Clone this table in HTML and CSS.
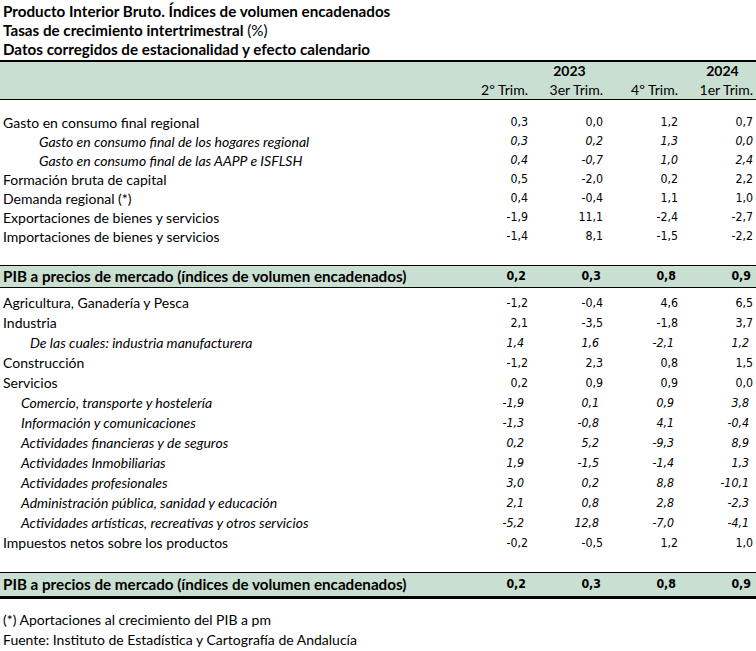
FILE: index.html
```html
<!DOCTYPE html>
<html lang="es">
<head>
<meta charset="utf-8">
<title>Producto Interior Bruto</title>
<link rel="stylesheet" href="styles.css">
</head>
<body>
<div class="titles">
  <div class="t">Producto Interior Bruto. Índices de volumen encadenados</div>
  <div class="t">Tasas de crecimiento intertrimestral <span class="norm">(%)</span></div>
  <div class="t">Datos corregidos de estacionalidad y efecto calendario</div>
</div>
<div class="table">
  <div class="head">
    <div class="hrow years"><span class="lab"></span><span class="y2023">2023</span><span class="y2024">2024</span></div>
    <div class="hrow trims"><span class="lab"></span><span>2º Trim.</span><span>3er Trim.</span><span>4º Trim.</span><span>1er Trim.</span></div>
  </div>
  <div class="sec sec1">
    <div class="row"><span class="lab">Gasto en consumo final regional</span><span class="v">0,3</span><span class="v">0,0</span><span class="v">1,2</span><span class="v">0,7</span></div>
    <div class="row it"><span class="lab ind1">Gasto en consumo final de los hogares regional</span><span class="v">0,3</span><span class="v">0,2</span><span class="v">1,3</span><span class="v">0,0</span></div>
    <div class="row it"><span class="lab ind1">Gasto en consumo final de las AAPP e ISFLSH</span><span class="v">0,4</span><span class="v">-0,7</span><span class="v">1,0</span><span class="v">2,4</span></div>
    <div class="row"><span class="lab">Formación bruta de capital</span><span class="v">0,5</span><span class="v">-2,0</span><span class="v">0,2</span><span class="v">2,2</span></div>
    <div class="row"><span class="lab">Demanda regional (*)</span><span class="v">0,4</span><span class="v">-0,4</span><span class="v">1,1</span><span class="v">1,0</span></div>
    <div class="row"><span class="lab">Exportaciones de bienes y servicios</span><span class="v">-1,9</span><span class="v">11,1</span><span class="v">-2,4</span><span class="v">-2,7</span></div>
    <div class="row"><span class="lab">Importaciones de bienes y servicios</span><span class="v">-1,4</span><span class="v">8,1</span><span class="v">-1,5</span><span class="v">-2,2</span></div>
  </div>
  <div class="pib">
    <span class="lab">PIB a precios de mercado (índices de volumen encadenados)</span><span class="v">0,2</span><span class="v">0,3</span><span class="v">0,8</span><span class="v">0,9</span>
  </div>
  <div class="sec sec2">
    <div class="row"><span class="lab">Agricultura, Ganadería y Pesca</span><span class="v">-1,2</span><span class="v">-0,4</span><span class="v">4,6</span><span class="v">6,5</span></div>
    <div class="row"><span class="lab">Industria</span><span class="v">2,1</span><span class="v">-3,5</span><span class="v">-1,8</span><span class="v">3,7</span></div>
    <div class="row it"><span class="lab ind2">De las cuales: industria manufacturera</span><span class="v">1,4</span><span class="v">1,6</span><span class="v">-2,1</span><span class="v">1,2</span></div>
    <div class="row"><span class="lab">Construcción</span><span class="v">-1,2</span><span class="v">2,3</span><span class="v">0,8</span><span class="v">1,5</span></div>
    <div class="row"><span class="lab">Servicios</span><span class="v">0,2</span><span class="v">0,9</span><span class="v">0,9</span><span class="v">0,0</span></div>
    <div class="row it"><span class="lab ind3">Comercio, transporte y hostelería</span><span class="v">-1,9</span><span class="v">0,1</span><span class="v">0,9</span><span class="v">3,8</span></div>
    <div class="row it"><span class="lab ind3">Información y comunicaciones</span><span class="v">-1,3</span><span class="v">-0,8</span><span class="v">4,1</span><span class="v">-0,4</span></div>
    <div class="row it"><span class="lab ind3">Actividades financieras y de seguros</span><span class="v">0,2</span><span class="v">5,2</span><span class="v">-9,3</span><span class="v">8,9</span></div>
    <div class="row it"><span class="lab ind3">Actividades Inmobiliarias</span><span class="v">1,9</span><span class="v">-1,5</span><span class="v">-1,4</span><span class="v">1,3</span></div>
    <div class="row it"><span class="lab ind3">Actividades profesionales</span><span class="v">3,0</span><span class="v">0,2</span><span class="v">8,8</span><span class="v">-10,1</span></div>
    <div class="row it"><span class="lab ind3">Administración pública, sanidad y educación</span><span class="v">2,1</span><span class="v">0,8</span><span class="v">2,8</span><span class="v">-2,3</span></div>
    <div class="row it"><span class="lab ind3">Actividades artísticas, recreativas y otros servicios</span><span class="v">-5,2</span><span class="v">12,8</span><span class="v">-7,0</span><span class="v">-4,1</span></div>
    <div class="row"><span class="lab">Impuestos netos sobre los productos</span><span class="v">-0,2</span><span class="v">-0,5</span><span class="v">1,2</span><span class="v">1,0</span></div>
  </div>
  <div class="pib pib-final">
    <span class="lab">PIB a precios de mercado (índices de volumen encadenados)</span><span class="v">0,2</span><span class="v">0,3</span><span class="v">0,8</span><span class="v">0,9</span>
  </div>
</div>
<div class="notes">
  <div>(*) Aportaciones al crecimiento del PIB a pm</div>
  <div>Fuente: Instituto de Estadística y Cartografía de Andalucía</div>
</div>
</body>
</html>
```
FILE: styles.css
```css
html, body {
  margin: 0;
  padding: 0;
  background: #ffffff;
  color: #000000;
}
body {
  width: 756px;
  font-family: "Lato", "Liberation Sans", sans-serif;
  font-size: 14px;
}
.titles {
  padding: 2px 0 0 3px;
}
.t {
  height: 19px;
  line-height: 19px;
  font-weight: bold;
  font-size: 15.2px;
}
.t .norm {
  font-weight: normal;
}
.table {
  border-top: 2px solid #000;
  margin-top: 1px;
}
.head {
  background: #c9dfd1;
  border-bottom: 1px solid #000;
  height: 37px;
}
.hrow, .row, .pib {
  display: grid;
  grid-template-columns: 453px repeat(4, 75px);
}
.hrow {
  height: 18px;
  line-height: 18px;
}
.years {
  font-weight: bold;
  grid-template-columns: 453px 225px 75px;
}
.years .y2023 {
  text-align: center;
  padding-left: 8px;
}
.years .y2024 {
  text-align: center;
  padding-left: 14px;
}
.trims {
  margin-top: 1px;
}
.trims span {
  text-align: right;
}
.lab {
  padding-left: 3px;
  white-space: nowrap;
}
.row {
  line-height: 19px;
  height: 19px;
}
.sec1 {
  padding: 13px 0 19px;
}
.sec2 {
  padding: 5px 0 19px;
}
.sec2 .row {
  height: 20px;
  line-height: 20px;
}
.v {
  text-align: right;
  font-family: "DejaVu Sans Condensed", "DejaVu Sans", sans-serif;
  font-size: 12.3px;
}
.it .lab, .it .v {
  font-style: italic;
}
.sec2 .it .v {
  padding-right: 4px;
}
.ind1 { padding-left: 39px; }
.ind2 { padding-left: 30px; }
.ind3 { padding-left: 21px; }
.pib {
  background: #c9dfd1;
  border-top: 1px solid #000;
  border-bottom: 1px solid #000;
  height: 21px;
  line-height: 21px;
  font-weight: bold;
}
.pib .lab {
  font-size: 15.2px;
}
.pib .v {
  font-weight: bold;
  padding-right: 2px;
}
.pib-final {
  height: 23px;
  line-height: 23px;
  border-bottom: 3px solid #000;
}
.notes {
  padding: 11px 0 0 3px;
}
.notes div {
  height: 20px;
  line-height: 20px;
}
```
